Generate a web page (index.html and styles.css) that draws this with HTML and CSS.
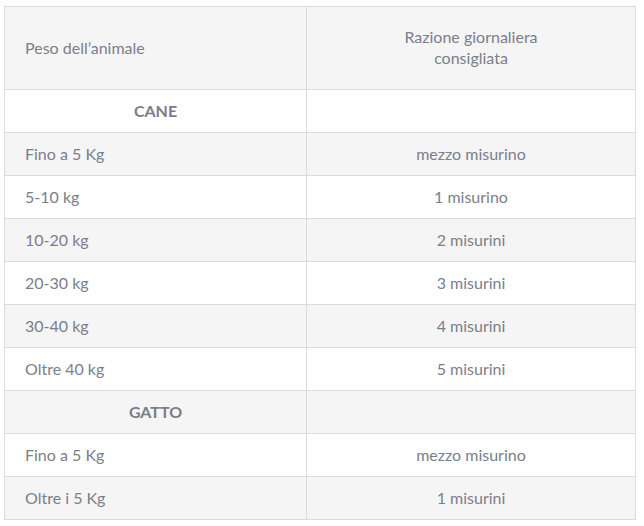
FILE: index.html
```html
<!DOCTYPE html>
<html lang="it">
<head>
<meta charset="utf-8">
<link rel="stylesheet" href="styles.css">
</head>
<body>
<div class="wrap">
<table class="ration">
  <thead>
    <tr><th class="c1">Peso dell’animale</th><th class="c2">Razione giornaliera<br>consigliata</th></tr>
  </thead>
  <tbody>
    <tr><td class="cat">CANE</td><td></td></tr>
    <tr><td>Fino a 5 Kg</td><td class="c2">mezzo misurino</td></tr>
    <tr><td>5-10 kg</td><td class="c2">1 misurino</td></tr>
    <tr><td>10-20 kg</td><td class="c2">2 misurini</td></tr>
    <tr><td>20-30 kg</td><td class="c2">3 misurini</td></tr>
    <tr><td>30-40 kg</td><td class="c2">4 misurini</td></tr>
    <tr><td>Oltre 40 kg</td><td class="c2">5 misurini</td></tr>
    <tr><td class="cat">GATTO</td><td></td></tr>
    <tr><td>Fino a 5 Kg</td><td class="c2">mezzo misurino</td></tr>
    <tr><td>Oltre i 5 Kg</td><td class="c2">1 misurini</td></tr>
  </tbody>
</table>
</div>
</body>
</html>
```
FILE: styles.css
```css
html, body {
  margin: 0;
  padding: 0;
  background: #fff;
}
.wrap {
  padding: 6px 8px 0 4px;
}
.ration {
  width: 632px;
  border-collapse: collapse;
  font-family: Lato, "Open Sans", sans-serif;
  font-size: 16px;
  color: #7b7e8c;
}
.ration th, .ration td {
  border: 1px solid #dcdcdc;
  padding: 0 20px 2px;
  height: 40px;
  text-align: left;
  font-weight: 400;
  line-height: 21px;
}
.ration th {
  height: 80px;
  background: #f5f5f5;
}
.ration .c1 { width: 261px; }
.ration .c2 { text-align: center; }
.ration tbody tr:nth-child(even) td { background: #f5f5f5; }
.ration td.cat {
  text-align: center;
  font-weight: 700;
  color: #7a7d88;
}
```
